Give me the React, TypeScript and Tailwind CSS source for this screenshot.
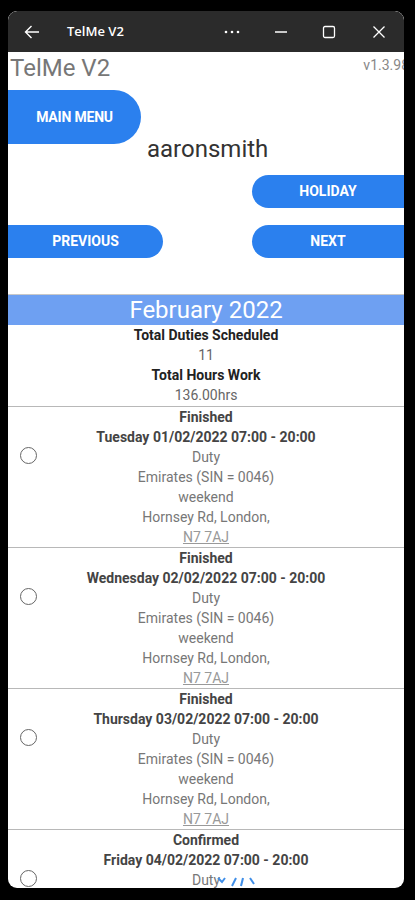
import React from 'react';

interface Duty {
  status: string;
  date: string;
}

const DUTIES: Duty[] = [
  { status: 'Finished', date: 'Tuesday 01/02/2022 07:00 - 20:00' },
  { status: 'Finished', date: 'Wednesday 02/02/2022 07:00 - 20:00' },
  { status: 'Finished', date: 'Thursday 03/02/2022 07:00 - 20:00' },
  { status: 'Confirmed', date: 'Friday 04/02/2022 07:00 - 20:00' },
];

const TitleBar = () => (
  <div className="h-[41px] shrink-0 bg-[#2b2b2b] rounded-t-[9px] flex items-center text-white">
    <svg width="16" height="14" viewBox="0 0 16 14" className="ml-[16px]" fill="none" stroke="white" strokeWidth="1.4">
      <path d="M15 7H1.5M7.5 1L1.5 7l6 6" />
    </svg>
    <span className="ml-[27px] text-[13px] font-semibold" style={{ fontFamily: '"Open Sans", sans-serif' }}>
      TelMe V2
    </span>
    <div className="flex-1" />
    <svg width="16" height="4" viewBox="0 0 16 4" className="mr-[34px]" fill="white">
      <circle cx="2" cy="2" r="1.3" />
      <circle cx="8" cy="2" r="1.3" />
      <circle cx="14" cy="2" r="1.3" />
    </svg>
    <svg width="14" height="14" viewBox="0 0 14 14" className="mr-[34px]" stroke="white" strokeWidth="1.3">
      <path d="M1 7h12" />
    </svg>
    <svg width="14" height="14" viewBox="0 0 14 14" className="mr-[36px]" fill="none" stroke="white" strokeWidth="1.3">
      <rect x="1.5" y="1.5" width="11" height="11" rx="1.5" />
    </svg>
    <svg width="14" height="14" viewBox="0 0 14 14" className="mr-[18px]" stroke="white" strokeWidth="1.3">
      <path d="M1.5 1.5l11 11M12.5 1.5l-11 11" />
    </svg>
  </div>
);

const DutyRow = ({ duty }: { duty: Duty }) => (
  <div className="border-t border-[#b8b8b8] grid grid-cols-[40px_1fr_40px] text-[14px] leading-[20px]">
    <div className="pt-[40px] pl-[12px]">
      <div className="w-[17px] h-[17px] rounded-full border-[1.5px] border-[#666]" />
    </div>
    <div className="flex flex-col items-center text-center">
      <div className="font-bold text-[#444]">{duty.status}</div>
      <div className="font-bold text-[#444] whitespace-nowrap">{duty.date}</div>
      <div className="text-[#777]">Duty</div>
      <div className="text-[#777]">Emirates (SIN = 0046)</div>
      <div className="text-[#777]">weekend</div>
      <div className="text-[#777]">Hornsey Rd, London,</div>
      <div className="text-[#999] underline">N7 7AJ</div>
    </div>
    <div />
  </div>
);

export default function App() {
  return (
    <div className="w-[415px] h-[900px] bg-black pt-[11px] pl-[8px] pr-[11px] pb-[12px]" style={{ fontFamily: 'Roboto, sans-serif' }}>
      <div className="h-full flex flex-col rounded-[9px] overflow-hidden bg-white relative">
        <TitleBar />
        <div className="flex-1 overflow-hidden">
          {/* Header */}
          <div className="flex justify-between items-start h-[38px]">
            <span className="ml-[2px] mt-[1px] text-[24px] leading-[30px] text-[#777]">TelMe V2</span>
            <span className="mt-[4px] -mr-[5px] text-[14px] leading-[18px] text-[#888]">v1.3.98</span>
          </div>

          <div className="flex items-start">
            <button className="w-[133px] h-[54px] bg-[#2b80ee] rounded-r-[27px] text-white font-bold text-[14px] tracking-[-0.2px]">
              MAIN MENU
            </button>
            <span className="ml-[6px] pt-[46px] text-[24px] leading-[26px] text-[#333]">aaronsmith</span>
          </div>

          <div className="flex justify-end mt-[13px]">
            <button className="w-[152px] h-[33px] bg-[#2b80ee] rounded-l-[17px] text-white font-bold text-[14px]">
              HOLIDAY
            </button>
          </div>

          <div className="flex justify-between mt-[17px]">
            <button className="w-[155px] h-[33px] bg-[#2b80ee] rounded-r-[17px] text-white font-bold text-[14px]">
              PREVIOUS
            </button>
            <button className="w-[152px] h-[33px] bg-[#2b80ee] rounded-l-[17px] text-white font-bold text-[14px]">
              NEXT
            </button>
          </div>

          {/* Month summary */}
          <div className="mt-[36px] border-t border-[#c8c8c8] bg-[#6ea0f2] h-[31px] flex items-center justify-center text-white text-[24px]">
            February 2022
          </div>
          <div className="flex flex-col items-center text-[14px] leading-[20px] pb-[1px]">
            <div className="font-bold text-[#222]">Total Duties Scheduled</div>
            <div className="text-[#666]">11</div>
            <div className="font-bold text-[#222]">Total Hours Work</div>
            <div className="text-[#666]">136.00hrs</div>
          </div>

          {DUTIES.map((d, i) => (
            <DutyRow key={i} duty={d} />
          ))}
        </div>

        {/* refresh indicator */}
        <svg width="44" height="14" viewBox="0 0 44 14" className="absolute bottom-0 left-[208px]" fill="none" stroke="#3f8ee8" strokeWidth="2">
          <path d="M2 4l4 4 3-4" />
          <path d="M16 12l4-8" />
          <path d="M25 12l2-8" />
          <path d="M34 4l4 6" />
        </svg>
      </div>
    </div>
  );
}
